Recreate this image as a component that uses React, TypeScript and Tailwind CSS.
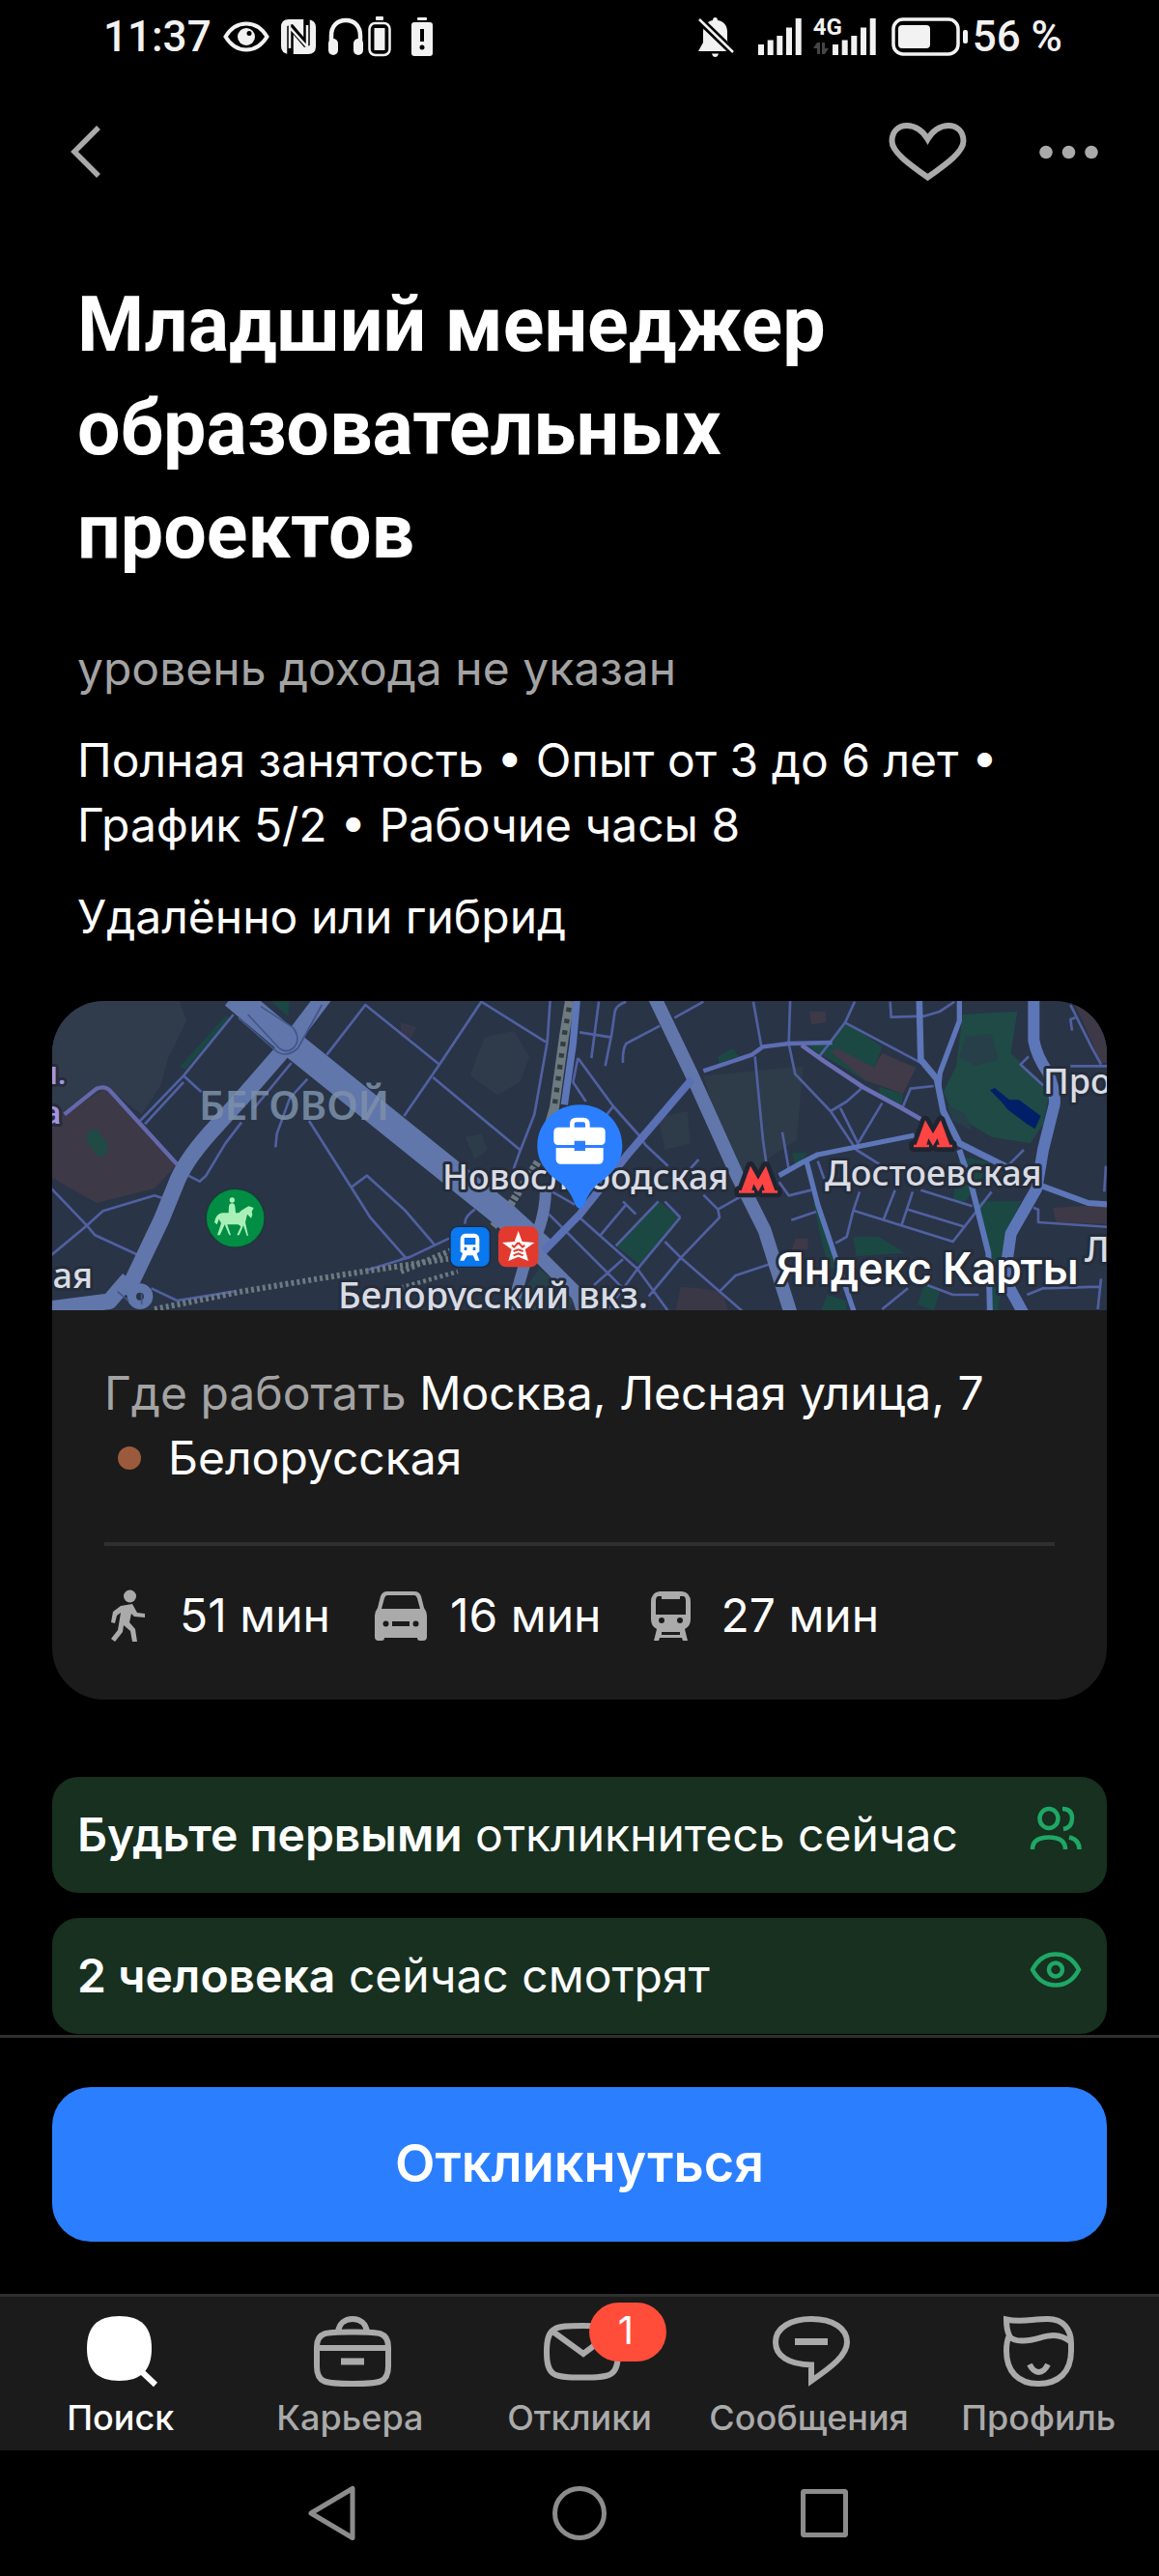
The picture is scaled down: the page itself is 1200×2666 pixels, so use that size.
import type { ReactNode } from "react";

const travelTimes = [
  { label: "51 мин", icon: <WalkIcon /> },
  { label: "16 мин", icon: <CarIcon /> },
  { label: "27 мин", icon: <TrainIcon /> },
];

const tabs = [
  { label: "Поиск", icon: <SearchIcon />, active: true },
  { label: "Карьера", icon: <CareerIcon /> },
  { label: "Отклики", icon: <MailIcon />, badge: 1 },
  { label: "Сообщения", icon: <MessageIcon /> },
  { label: "Профиль", icon: <ProfileIcon /> },
];

export default function App() {
  return (
    <div className="flex min-h-screen flex-col bg-black font-['Inter',sans-serif] text-white">
      <StatusBar />
      <Header />
      <main className="flex-1">
        <section className="px-20">
          <h1 className="mt-11 max-w-[900px] font-['Roboto',sans-serif] text-[79px] leading-[107px] font-bold">
            Младший менеджер образовательных проектов
          </h1>
          <p className="mt-[54px] text-5xl leading-[67px] text-[#a3a3a3]">
            уровень дохода не указан
          </p>
          <p className="mt-7 text-5xl leading-[67px]">
            Полная занятость • Опыт от 3 до 6 лет • График 5/2 • Рабочие часы 8
          </p>
          <p className="mt-7 text-5xl leading-[67px]">Удалённо или гибрид</p>
        </section>

        <section className="mx-[54px] mt-[54px] overflow-hidden rounded-[54px] bg-[#1b1b1b]">
          <CityMap />
          <div className="px-[54px] pt-[52px] pb-[54px] text-5xl leading-[67px]">
            <p>
              <span className="text-[#a3a3a3]">Где работать</span> Москва,
              Лесная улица, 7
            </p>
            <p className="flex items-center gap-7 pl-3.5">
              <span className="size-6 rounded-full bg-[#9c5a3c]" />
              Белорусская
            </p>
            <ul className="mt-[54px] flex gap-[46px] border-t-4 border-[#2f2f2f] pt-[38px]">
              {travelTimes.map(({ label, icon }) => (
                <li key={label} className="flex items-center gap-6">
                  {icon}
                  {label}
                </li>
              ))}
            </ul>
          </div>
        </section>

        <section className="mx-[54px] mt-20 flex flex-col gap-[26px]">
          <Notice icon={<PeopleIcon />}>
            <b className="font-semibold">Будьте первыми</b> откликнитесь сейчас
          </Notice>
          <Notice icon={<EyeIcon />}>
            <b className="font-semibold">2 человека</b> сейчас смотрят
          </Notice>
        </section>
      </main>

      <div className="border-t-[3px] border-[#2f2f2f] px-[54px] pt-[51px] pb-[54px]">
        <button className="h-40 w-full rounded-[40px] bg-[#2b7fff] pb-1 text-[54px] font-semibold">
          Откликнуться
        </button>
      </div>
      <TabBar />
      <SystemNav />
    </div>
  );
}

function Notice({ icon, children }: { icon: ReactNode; children: ReactNode }) {
  return (
    <div className="flex items-start justify-between rounded-[27px] bg-[#17301f] px-[26px] py-[26px]">
      <p className="text-5xl leading-[68px]">{children}</p>
      {icon}
    </div>
  );
}

function StatusBar() {
  return (
    <div className="flex h-[75px] items-center justify-between pr-[100px] pl-[107px] font-['Roboto',sans-serif] text-[44px] leading-none font-medium text-[#f2f2f2]">
      <div className="flex items-center gap-3">
        <span>11:37</span>
        <svg className="h-8 w-12" viewBox="0 0 48 32" fill="none">
          <path d="M2.500 16C8 7 15 2.500 24 2.500S40 7 45.500 16C40 25 33 29.500 24 29.500S8 25 2.500 16Z" stroke="currentColor" strokeWidth="4" />
          <circle cx="24" cy="16" r="9" fill="currentColor" />
          <circle cx="27" cy="12.500" r="2.500" fill="#000" />
        </svg>
        <svg className="size-9" viewBox="0 0 36 36">
          <path d="M8 0H28Q36 1 36 8V28Q36 36 28 36H8Q0 35 0 28V8Q0 0 8 0Z" fill="currentColor" />
          <path d="M9.500 36V7L26.500 27V0" stroke="#000" strokeWidth="6.500" strokeLinejoin="bevel" fill="none" />
          <path d="M9 6V30M9.500 9L26.500 28M27 30V6" stroke="currentColor" strokeWidth="2.500" fill="none" />
        </svg>
        <div className="flex items-center gap-1">
          <svg className="h-10 w-[38px]" viewBox="0 0 38 40" fill="none">
            <path d="M4 28V19C4 9 10 3 19 3S34 9 34 19V28" stroke="currentColor" strokeWidth="4.500" />
            <rect x="1" y="22" width="10" height="17" rx="5" fill="currentColor" />
            <rect x="27" y="22" width="10" height="17" rx="5" fill="currentColor" />
          </svg>
          <svg className="h-[42px] w-6" viewBox="0 0 24 42" fill="none">
            <rect x="8" y="0" width="8" height="4" rx="1" fill="currentColor" />
            <rect x="1.500" y="7" width="21" height="33" rx="6" stroke="currentColor" strokeWidth="2.500" />
            <rect x="6.500" y="12" width="11" height="23" fill="currentColor" />
          </svg>
        </div>
        <svg className="ml-2 h-10 w-6" viewBox="0 0 24 40">
          <rect x="7" y="0" width="10" height="3" rx="1" fill="currentColor" />
          <rect x="1" y="5" width="22" height="35" rx="3" fill="currentColor" />
          <path d="M12 12V25" stroke="#000" strokeWidth="4" />
          <circle cx="12" cy="31" r="2.500" fill="#000" />
        </svg>
      </div>
      <div className="flex items-center">
        <svg className="h-[42px] w-[38px]" viewBox="0 0 38 42">
          <path d="M18.500 1C20 1 21 2 21 4C28 5 31 10 31 16V25L37 36H1L6 27V16C6 10 10 5 16 4C16 2 17 1 18.500 1Z" fill="currentColor" />
          <path d="M15 38.500H22Q21 42 18.500 42T15 38.500Z" fill="currentColor" />
          <path d="M2 3L37 37" stroke="#000" strokeWidth="8" />
          <path d="M2 3L37 37" stroke="currentColor" strokeWidth="2.500" />
        </svg>
        <SignalBars className="ml-[25px]" />
        <div className="relative ml-3 flex w-[65px] justify-end">
          <SignalBars />
          <span className="absolute -top-px left-0 text-2xl leading-5 font-bold">
            4G
          </span>
          <svg className="absolute bottom-0 left-0 h-3.5 w-4 text-[#444]" viewBox="0 0 16 14">
            <path d="M0 7L4 1H7V13H4V7ZM16 7L12 13H9V1H12V7Z" fill="currentColor" />
          </svg>
        </div>
        <svg className="mr-1 ml-4 h-10 w-20" viewBox="0 0 80 40" fill="none">
          <rect x="2" y="2" width="67" height="36" rx="10" stroke="currentColor" strokeWidth="3.500" />
          <rect x="7" y="8" width="33" height="24" rx="4" fill="currentColor" />
          <rect x="74" y="13" width="5" height="14" rx="2" fill="currentColor" />
        </svg>
        <span>56 %</span>
      </div>
    </div>
  );
}

function SignalBars({ className = "" }: { className?: string }) {
  return (
    <svg className={`h-[38px] w-[45px] ${className}`} viewBox="0 0 45 38">
      <path d="M3 38V27M12.700 38V22.500M22.300 38V18M32 38V9.500M41.700 38V0" stroke="currentColor" strokeWidth="6" />
    </svg>
  );
}

function Header() {
  return (
    <header className="flex h-[164px] items-center justify-between pr-[53px] pl-12 text-[#aaa]">
      <button aria-label="Назад">
        <svg className="size-[81px]" viewBox="0 0 81 81" fill="none">
          <path d="M54 15L29 40L54 65" stroke="currentColor" strokeWidth="5.500" />
        </svg>
      </button>
      <div className="flex gap-[65px]">
        <button aria-label="В избранное">
          <svg className="size-[81px]" viewBox="0 0 81 81" fill="none">
            <path d="M40.500 66.500C20 52 3.500 40 3.500 29C3.500 19 10 13 19 13C28 13 36 19 40.500 27C45 19 53 13 62 13C71 13 77.500 19 77.500 29C77.500 40 61 52 40.500 66.500Z" stroke="currentColor" strokeWidth="6" />
          </svg>
        </button>
        <button aria-label="Ещё">
          <svg className="size-[81px]" viewBox="0 0 81 81" fill="currentColor">
            <circle cx="17" cy="40.500" r="6.800" />
            <circle cx="40.500" cy="40.500" r="6.800" />
            <circle cx="64" cy="40.500" r="6.800" />
          </svg>
        </button>
      </div>
    </header>
  );
}

function TabBar() {
  return (
    <nav className="grid grid-cols-5 border-t-[3px] border-[#2f2f2f] bg-[#1b1b1b] px-1.5 pt-4 pb-3 text-[#aaa]">
      {tabs.map(({ label, icon, active, badge }) => (
        <a
          key={label}
          href="#"
          className={`flex flex-col items-center gap-1.5 text-4xl leading-[44px] font-medium ${
            active ? "text-white" : ""
          }`}
        >
          <span className="relative">
            {icon}
            {badge && (
              <span className="absolute -top-2.5 left-[52px] flex h-[61px] w-20 items-center justify-center rounded-full bg-[#ff4d3a] pr-1 pb-1 text-[40px] font-normal text-white">
                {badge}
              </span>
            )}
          </span>
          {label}
        </a>
      ))}
    </nav>
  );
}

function SystemNav() {
  return (
    <nav className="flex h-[130px] items-center justify-center gap-[195px] text-[#8c8c8c]">
      <button aria-label="Назад">
        <svg className="size-[60px]" viewBox="0 0 60 60" fill="none" stroke="currentColor" strokeWidth="5" strokeLinejoin="round">
          <path d="M50 4.500V55.500L7 30Z" />
        </svg>
      </button>
      <button aria-label="Домой">
        <svg className="size-[60px]" viewBox="0 0 60 60" fill="none" stroke="currentColor" strokeWidth="5">
          <circle cx="30" cy="30" r="25.500" />
        </svg>
      </button>
      <button aria-label="Недавние">
        <svg className="size-[60px]" viewBox="0 0 60 60" fill="none" stroke="currentColor" strokeWidth="5" strokeLinejoin="round">
          <rect x="6.500" y="7.500" width="44" height="45" rx="1" />
        </svg>
      </button>
    </nav>
  );
}

function TabSvg({ children }: { children: ReactNode }) {
  return (
    <svg
      className="h-[81px] w-[84px] overflow-visible"
      viewBox="0 0 84 81"
      fill="none"
      stroke="currentColor"
      strokeWidth="6"
    >
      {children}
    </svg>
  );
}

function SearchIcon() {
  return (
    <TabSvg>
      <path d="M40.500 4C63 4 74 15 74 37.500S63 71 40.500 71S7 60 7 37.500S18 4 40.500 4Z" fill="currentColor" stroke="none" />
      <path d="M60 58L78 75" />
    </TabSvg>
  );
}

function CareerIcon() {
  return (
    <TabSvg>
      <path d="M45 20.500C72 20.500 82 20 82 36V56C82 73 74 74 45 74S8 73 8 56V36C8 20 18 20.500 45 20.500Z" />
      <path d="M30 20.500C31 12 37 7 45 7S59 12 60 20.500M8 37H82" />
      <path d="M33 51H57" strokeWidth="7" />
    </TabSvg>
  );
}

function MailIcon() {
  return (
    <TabSvg>
      <path d="M45 14C74 14 82 15 82 41S74 67.500 45 67.500S8 67 8 41S16 14 45 14Z" />
      <path d="M13 19L46 43L78 19" />
    </TabSvg>
  );
}

function MessageIcon() {
  return (
    <TabSvg>
      <path d="M44 54.500C20 54 7 45 7 31C7 16 23 7 44 7C67 7 81 17 81 31C81 44 66 56 44 71Z" />
      <path d="M27 30.500H61" strokeWidth="7" />
    </TabSvg>
  );
}

function ProfileIcon() {
  return (
    <TabSvg>
      <path d="M12 24C9 18 9 13 9 7.500C25 11 35 7 52 7C68 7 76 18 76 32V40C76 62 63 74 42 74S9 61 9 40C9 34 10 28 12 24Z" />
      <path d="M11 24C15 29 20 30 27 29.500C40 29 47 24 58 24C66 24 71 27 76 31" />
      <path d="M33 54C38 64.500 47 64.500 52 54" />
    </TabSvg>
  );
}

function WalkIcon() {
  return (
    <svg className="size-[54px] text-[#aaa]" viewBox="0 0 54 54" fill="currentColor">
      <circle cx="26.500" cy="7" r="6.500" />
      <path d="M17 17L29 15L34 24L42 25V29L31 28L28 25L26 34L32 41L34 54H29L27 43L20 37L19 44L11 54L7 51L14 42L17 24L13 27L11 35L7 34L9 23Z" />
    </svg>
  );
}

function CarIcon() {
  return (
    <svg className="size-[54px] text-[#aaa]" viewBox="0 0 54 54">
      <path d="M13 2H41Q46 2 48 7L51 19Q54 23 54 27V49Q54 53 50 53H47Q44 53 44 50H10Q10 53 7 53H4Q0 53 0 49V27Q0 23 3 19L6 7Q8 2 13 2Z" fill="currentColor" />
      <path d="M13 6H41Q43 6 44 9L47 20H7L10 9Q11 6 13 6ZM18 33H36V38H18Z" fill="#1b1b1b" />
      <circle cx="11.500" cy="35.500" r="3" fill="#1b1b1b" />
      <circle cx="42.500" cy="35.500" r="3" fill="#1b1b1b" />
    </svg>
  );
}

function TrainIcon() {
  return (
    <svg className="size-[54px] text-[#aaa]" viewBox="0 0 54 54">
      <path d="M15 2H38Q47 3 47 13V31Q47 38 41 41L44 53H39L38 50H15L14 53H9L12 41Q6 38 6 31V13Q6 3 15 2Z" fill="currentColor" />
      <path d="M13 7H17V10H36V7H40Q42 8 42 11V26H11V11Q11 8 13 7ZM17 44H36V47H17Z" fill="#1b1b1b" />
      <circle cx="17" cy="32" r="3" fill="#1b1b1b" />
      <circle cx="36" cy="32" r="3" fill="#1b1b1b" />
    </svg>
  );
}

function PeopleIcon() {
  return (
    <svg className="size-[54px] text-[#1fa766]" viewBox="0 0 54 54" fill="none" stroke="currentColor" strokeWidth="4.500">
      <ellipse cx="20" cy="17" rx="9.500" ry="10" />
      <path d="M34 7C41 7 44 11 44 17S41 27 35 28" />
      <path d="M3 49C3 40 10 36.500 20 36.500S37 40 37 49M41 36.500C48 38 51.500 42 51.500 49" />
    </svg>
  );
}

function EyeIcon() {
  return (
    <svg className="size-[54px] text-[#1fa766]" viewBox="0 0 54 54" fill="none" stroke="currentColor" strokeWidth="4.500">
      <path d="M3 27.500C9 16 17 11.500 27 11.500S45 16 51 27.500C45 39 37 43.500 27 43.500S9 39 3 27.500Z" />
      <circle cx="27" cy="27.500" r="7" />
    </svg>
  );
}

function MetroIcon({ x, y }: { x: number; y: number }) {
  return (
    <path
      transform={`translate(${x} ${y})`}
      d="M0 76H8L36 0L60 42L84 0L112 76H120V84H72V76H80L74 56L60 80L46 56L40 76H48V84H0Z"
      fill="#ff4444"
      stroke="#1f2530"
      strokeWidth="28"
      strokeLinejoin="round"
      className="[paint-order:stroke]"
    />
  );
}

// Geometry is drawn in three side-by-side tiles at 3x, labels at 1x.
function CityMap() {
  return (
    <svg className="block w-full" viewBox="0 0 1092 320" role="img" aria-label="Карта">
      <rect width="1092" height="320" fill="#293447" />
      <g transform="scale(0.33333)" fill="none" strokeLinejoin="round">
        {/* parks and blocks */}
        <g transform="translate(-12 -18)">
          <path d="M0 0H400L430 80L370 200L350 280L290 370L180 285L50 370L0 400Z" fill="#303b4c" />
          <path d="M0 400L175 290L400 525L330 600L150 645L0 560Z" fill="#3e3947" />
          <path d="M120 425L150 415L185 460L180 495L155 500L120 455Z" fill="#1f4a45" />
          <path d="M550 65L570 70L425 230L408 222ZM680 10H750L745 65Z" fill="#1b4644" />
        </g>
        <g transform="translate(1083 -18)">
          <path d="M260 130L350 110L400 190L370 270L300 310L215 250Z" fill="#2f3b4b" />
          <path d="M0 85L50 100L30 135L0 130Z" fill="#38374a" />
          <path d="M200 440L250 430L270 480L230 510Z" fill="#2d3c49" />
          <path d="M940 250L1250 220L1230 450L1120 520L1080 640L1000 470ZM800 380L890 360L900 460L820 480Z" fill="#2e3b49" />
          <path d="M800 640L868 690L740 835L668 778ZM985 190L1030 165L1050 190L990 210Z" fill="#1c4844" />
          <path d="M870 905L930 910L1000 920L1020 990H850Z" fill="#3a3747" />
          <path d="M430 850L540 930L520 990H330Z" fill="#27414a" />
        </g>
        <g transform="translate(2178 -18)">
          <path d="M650 60L820 50L800 180L920 300L900 400L860 460L740 440L620 370L590 300L630 220Z" fill="#1f4a45" />
          <path d="M660 130L740 120L760 200L690 220L640 190ZM600 340L660 370L680 420L620 390Z" fill="#273f49" />
          <path d="M735 295L750 288L795 325L825 325L893 375L875 415L850 400L790 355L770 330Z" fill="#001f68" />
          <path d="M290 85L400 160L380 215L355 270L215 185ZM390 285L465 305L460 345L395 320ZM170 155L240 145L205 185Z" fill="#1c4844" />
          <path d="M400 180L505 225L465 305L350 265L240 175L260 165L375 225Z" fill="#413a48" />
          <path d="M700 640L830 640L790 740L760 980H735L720 760ZM310 750L390 750L470 800L320 810ZM640 500L740 520L660 640L620 640Z" fill="#1c4844" />
          <path d="M185 640L220 700L270 860L230 840ZM230 930L290 950V980H210ZM530 900L580 920L560 980L510 960ZM120 490L170 490L130 530Z" fill="#1c4844" />
          <path d="M175 50L225 50V85L180 90ZM930 660L1100 650V710L940 705ZM1000 30L1110 60V210L1080 210ZM130 755H170V790H120Z" fill="#3e3947" />
        </g>

        {/* streets */}
        <g stroke="#5160a0" strokeWidth="8">
          <path
            transform="translate(-12 -18)"
            d="M575 60L420 250L285 390M420 270L300 400M420 250L475 300M0 590L120 715L145 745L275 805M0 815L120 715L170 670L330 622L355 630M435 560L470 578L490 560L550 460L600 395M755 210L640 350M805 260L750 320L710 430L706 472M865 185L985 30L1215 215M810 390L940 595L1000 690L1110 815M940 597L990 560L1110 670L1200 775M985 855L1125 812M320 910L400 948L575 920"
          />
          <path
            transform="translate(1083 -18)"
            d="M10 375L120 215L250 20L450 145M100 255L370 480M465 0L455 145L415 370L370 485L350 540M555 115L650 130M615 20L592 195M700 20Q670 30 665 50L655 120L635 220M805 95L700 150Q688 170 690 210M550 195L660 345L740 435L760 465L830 530M550 195L535 270L575 330M660 345L640 370M850 70L940 20M925 510L880 560M700 650L620 745M460 680L700 920M555 690L735 850L830 980M800 640L668 778M868 690L735 850L640 980M820 640L868 690M820 765L870 815L1060 980M940 620L985 665L990 690L870 815L770 935M1065 620L985 665M1160 830L1040 870L990 920M690 640L730 680M690 820L600 900M0 820L30 812L150 755M230 665Q195 690 200 710M470 610L540 650"
          />
          <path
            transform="translate(2178 -18)"
            d="M0 20L25 160M115 0L110 150L130 245L240 360L320 480L400 530M5 190L30 450L40 520M315 20L285 85L205 190M285 85L530 215M425 20L428 68L530 65L580 50L625 20M465 345L488 290L560 282M240 360L290 330L335 290M270 350L325 460L400 335M90 425L110 540M80 580L110 622L180 605M118 698L195 672M330 610L310 670L290 750L255 770M310 668L620 765L740 610M440 605L405 695M495 610L460 715M520 605L680 655M480 665L660 720M200 515L220 570M840 480L790 530M855 190L830 215L900 280M985 30L1050 160L1080 215M985 220H1110M990 110L985 75L1000 70M870 660L885 665V705L1110 720M1095 530L1090 610M540 900L620 930H700M480 910L400 975M1080 880L1070 975M850 930L900 910L1075 905"
          />
        </g>

        {/* railway */}
        <g stroke="#6d7a80">
          <path d="M318 957L588 902L888 852L1230 800M1083 840L1250 770" strokeWidth="18" strokeDasharray="9 9" />
          <path d="M1083 890L1260 840" strokeWidth="14" strokeDasharray="9 9" />
          <path d="M1608 0L1590 110L1560 330L1540 400" strokeWidth="30" />
          <path d="M1508 500L1425 630L1370 700" strokeWidth="24" strokeDasharray="12 6" />
          <path d="M1606 20L1590 110L1560 330" stroke="#343d44" strokeWidth="16" strokeDasharray="14 22" />
        </g>

        {/* avenues */}
        <g stroke="#6176aa">
          <g transform="translate(-12 -18)">
            <path d="M50 370L150 290Q175 280 190 295L400 525" stroke="#6468ac" strokeWidth="13" />
            <path d="M575 0L735 135L1095 425L1425 690L1535 790" strokeWidth="82" />
            <path d="M860 0L735 165L600 320L500 430Q420 520 395 590L350 700L240 930" strokeWidth="50" />
            <path d="M250 880L190 950L0 975" strokeWidth="50" />
            <circle cx="285" cy="935" r="26" strokeWidth="28" />
            <path d="M620 60L715 162Q740 185 765 160Q785 135 760 100L660 35M590 70L710 175Q740 195 775 165L850 30M215 920L250 950M290 925V960" stroke="#43558a" strokeWidth="5" />
          </g>
          <g transform="translate(1083 -18)">
            <path d="M548 0L535 150L508 340" stroke="#5d76b8" strokeWidth="22" />
            <path d="M785 0L905 250L1045 560L1130 730L1215 1000" strokeWidth="42" />
            <path d="M905 260L700 500L556 680L420 820" stroke="#5a70b4" strokeWidth="24" />
            <path d="M940 235L1090 185L1125 160L1205 150L1340 147" stroke="#5d6db2" strokeWidth="13" />
            <path d="M450 600Q450 700 400 790L380 850L340 990" strokeWidth="36" />
            <path d="M420 800L550 930L570 990" strokeWidth="42" />
          </g>
          <g transform="translate(2178 -18)" stroke="#5d76b8">
            <path d="M640 0V80L580 240L575 290" strokeWidth="16" />
            <path d="M515 0L520 200L570 260L590 360L640 460L790 535" strokeWidth="20" />
            <path d="M871 0V140Q880 190 915 240Q940 300 935 340L900 480L880 600L800 740L780 880L840 990" strokeWidth="36" />
            <path d="M890 590L1040 645L1110 650M640 480L680 600L730 800L735 990" strokeWidth="18" />
            <path d="M150 155L220 205L340 285L460 350L520 385" stroke="#6a6fb4" strokeWidth="14" />
            <path d="M80 560L160 515L200 495L500 435M165 515L200 650L315 990" strokeWidth="16" />
          </g>
        </g>
      </g>

      <g
        className="font-['Noto_Sans',sans-serif] [paint-order:stroke]"
        fill="#d9dce4"
        stroke="#252d3b"
        strokeWidth="6"
        strokeLinejoin="round"
        fontSize="36"
        fontWeight="500"
      >
        <text x="152" y="123" fontSize="42" fontWeight="600" fill="#7d91aa" stroke="none" opacity="0.85">БЕГОВОЙ</text>
        <g className="font-['Roboto',sans-serif]" fontSize="34" fill="#a495e0" textAnchor="end">
          <text x="15" y="86">и.</text>
          <text x="9" y="127">а</text>
        </g>
        <text x="42" y="297" textAnchor="end">вая</text>
        <text x="404" y="195">Новослободская</text>
        <text x="800" y="191">Достоевская</text>
        <text x="296" y="318" fontSize="38">Белорусский вкз.</text>
        <text x="1026" y="96">Про</text>
        <text x="1069" y="270">Л</text>
        <text x="750" y="293" fontSize="47" fill="#fff" className="font-['Roboto',sans-serif]">Яндекс Карты</text>
      </g>

      <g transform="scale(0.33333)">
        <MetroIcon x={2133} y={512} />
        <MetroIcon x={2676} y={370} />
        <g transform="translate(-12 -18)">
          <circle cx="581" cy="692" r="92" fill="#028d45" stroke="#1d3a3a" strokeWidth="6" />
          <path d="M638 660L622 655L600 668L592 676H582L580 655Q578 646 571 646Q563 646 561 655L560 676H540Q520 680 516 705L524 712L530 695L537 708L525 745H533L542 725L548 712L562 745H567L556 712H590L598 718L586 745H593L606 715L617 747H621L612 705L618 680L630 692L634 682L632 672Z" fill="#a8f0b8" />
          <circle cx="571" cy="636" r="8" fill="#a8f0b8" />
        </g>
        <g transform="translate(1083 -18)">
          <rect x="153" y="718" width="124" height="126" rx="24" fill="#0a78ee" stroke="#1d2940" strokeWidth="4" />
          <path d="M200 740H228Q244 742 244 758V796L236 802L244 824H232L224 808H206L196 824H184L192 802L185 796V758Q186 742 200 740Z" fill="#fff" />
          <path d="M197 753H232V775H197ZM197 782H205V792H197ZM224 782H232V792H224Z" fill="#0a78ee" />
          <rect x="303" y="718" width="124" height="126" rx="24" fill="#e23a2e" />
          <path d="M365 732L377 765L415 768L386 789L396 825L365 812L334 825L344 789L315 768L353 765Z" fill="#fff" />
          <path d="M365 768L352 782L345 776M365 768L378 782L385 776M350 795L365 790L380 795M350 808L365 802L380 808" stroke="#e23a2e" strokeWidth="6" fill="none" />
          <path d="M556 340C630 340 688 396 688 468C688 520 655 555 620 580C590 602 580 625 570 650Q556 674 542 650C532 625 522 602 492 580C457 555 424 520 424 468C424 396 482 340 556 340Z" fill="#2b7fff" />
          <path d="M525 410V398Q526 380 544 380H568Q586 381 587 398V410H622Q635 411 635 424V452Q634 464 622 465H573V452H539V465H488Q476 464 475 452V424Q476 411 488 410ZM539 410H573V400Q573 394 567 394H545Q539 394 539 400ZM482 474H539V483H573V474H629V510Q628 524 614 524H497Q483 524 482 510Z" fill="#fff" />
        </g>
      </g>
    </svg>
  );
}
